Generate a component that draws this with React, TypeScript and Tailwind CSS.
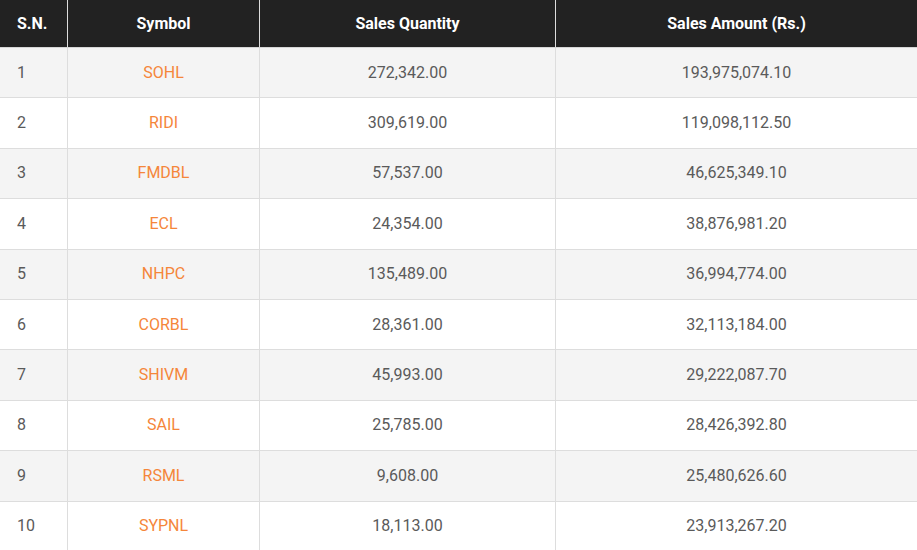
const rows = [
  ['1', 'SOHL', '272,342.00', '193,975,074.10'],
  ['2', 'RIDI', '309,619.00', '119,098,112.50'],
  ['3', 'FMDBL', '57,537.00', '46,625,349.10'],
  ['4', 'ECL', '24,354.00', '38,876,981.20'],
  ['5', 'NHPC', '135,489.00', '36,994,774.00'],
  ['6', 'CORBL', '28,361.00', '32,113,184.00'],
  ['7', 'SHIVM', '45,993.00', '29,222,087.70'],
  ['8', 'SAIL', '25,785.00', '28,426,392.80'],
  ['9', 'RSML', '9,608.00', '25,480,626.60'],
  ['10', 'SYPNL', '18,113.00', '23,913,267.20'],
];

const cols = 'grid grid-cols-[68px_192px_296px_1fr]';

export default function App() {
  return (
    <div className="w-[917px] h-[550px] overflow-hidden bg-white font-['Roboto',sans-serif]">
      <div className={`${cols} h-[48px] bg-[#222222] border-b border-[#d6d6d6] text-white font-bold text-[16px]`}>
        <div className="flex items-center pl-[17px] border-r border-[#dddddd]">S.N.</div>
        <div className="flex items-center justify-center border-r border-[#dddddd]">Symbol</div>
        <div className="flex items-center justify-center border-r border-[#dddddd]">Sales Quantity</div>
        <div className="flex items-center justify-center">Sales Amount (Rs.)</div>
      </div>
      {rows.map((r, i) => (
        <div
          key={r[0]}
          className={`${cols} h-[50.4px] border-b border-[#dddddd] text-[16px] text-[#5a5a5a] ${
            i % 2 === 0 ? 'bg-[#f4f4f4]' : 'bg-white'
          }`}
        >
          <div className="flex items-center pl-[17px] border-r border-[#dddddd]">{r[0]}</div>
          <div className="flex items-center justify-center border-r border-[#dddddd] text-[#f5863a]">{r[1]}</div>
          <div className="flex items-center justify-center border-r border-[#dddddd]">{r[2]}</div>
          <div className="flex items-center justify-center">{r[3]}</div>
        </div>
      ))}
    </div>
  );
}
